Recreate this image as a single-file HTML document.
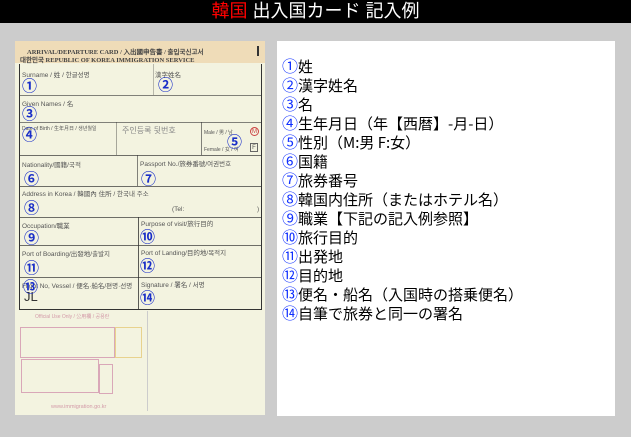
<!DOCTYPE html>
<html><head><meta charset="utf-8"><style>
*{margin:0;padding:0;box-sizing:border-box}
body{width:631px;height:437px;background:#cccccc;position:relative;overflow:hidden;font-family:"Liberation Sans","Noto Sans CJK JP",sans-serif}
#hd{position:absolute;left:0;top:0;width:631px;height:23px;background:#000;color:#fff;text-align:center;font-size:18px;line-height:23px;letter-spacing:0px}
#hd span{color:#ff0000}
#card{position:absolute;left:15px;top:41px;width:250px;height:374px;background:#f3f3e0;overflow:hidden}
#band{position:absolute;left:0;top:0;width:250px;height:22px;background:#efdcb8}
.a{position:absolute;color:#555;font-size:6.5px;white-space:nowrap}
.l{position:absolute;background:#333}
.n{position:absolute;color:#1a2fc8;font-size:15px;font-weight:bold;font-family:"Liberation Serif","Noto Sans CJK JP",serif}
.p{position:absolute;border:1px solid #d9a7b8}
#list{position:absolute;left:277px;top:41px;width:338px;height:375px;background:#fff}
#list div{position:absolute;left:5px;font-size:15px;line-height:19px;color:#000;white-space:nowrap;font-family:"Noto Sans CJK JP",sans-serif}
#list b{font-weight:normal;color:#1030ff;font-size:16px}
</style></head><body>
<div id="hd"><span>韓国</span> 出入国カード 記入例</div>
<div id="card">
<div id="band"></div>
<div class="a" style="left:12px;top:5px;color:#444;font-weight:bold;font-family:'Liberation Serif',serif">ARRIVAL/DEPARTURE CARD / 入出國申告書 / 출입국신고서</div>
<div class="a" style="left:5px;top:13px;color:#444;font-weight:bold;font-family:'Liberation Serif',serif">대한민국 REPUBLIC OF KOREA IMMIGRATION SERVICE</div>
<div class="l" style="left:242px;top:5px;width:2px;height:10px"></div>
<div class="l" style="left:4px;top:23px;width:1px;height:246px"></div>
<div class="l" style="left:246px;top:23px;width:1px;height:246px"></div>
<div class="l" style="left:4px;top:268px;width:243px;height:1px"></div>
<div class="l" style="left:4px;top:54px;width:243px;height:1px;opacity:.6"></div>
<div class="l" style="left:4px;top:81px;width:243px;height:1px;opacity:.6"></div>
<div class="l" style="left:4px;top:114px;width:243px;height:1px;opacity:.7"></div>
<div class="l" style="left:4px;top:145px;width:243px;height:1px;opacity:.7"></div>
<div class="l" style="left:4px;top:176px;width:243px;height:1px;opacity:.7"></div>
<div class="l" style="left:4px;top:204px;width:243px;height:1px;opacity:.7"></div>
<div class="l" style="left:4px;top:236px;width:243px;height:1px;opacity:.7"></div>
<div class="l" style="left:138px;top:23px;width:1px;height:31px;opacity:.3"></div>
<div class="l" style="left:101px;top:81px;width:1px;height:33px;opacity:.4"></div>
<div class="l" style="left:186px;top:81px;width:1px;height:33px;opacity:.6"></div>
<div class="l" style="left:122px;top:114px;width:1px;height:31px;opacity:.6"></div>
<div class="l" style="left:123px;top:176px;width:1px;height:93px;opacity:.8"></div>
<div class="a" style="left:7px;top:28px">Surname / 姓 / 한글성명</div>
<div class="a" style="left:140px;top:28px">漢字姓名</div>
<div class="a" style="left:7px;top:57px">Given Names / 名</div>
<div class="a" style="left:7px;top:84px;font-size:5px">Date of Birth / 生年月日 / 생년월일</div>
<div class="a" style="left:107px;top:84px;font-size:8px;color:#888">주인등록 뒷번호</div>
<div class="a" style="left:189px;top:88px;font-size:5px">Male / 男 / 남</div>
<div class="a" style="left:189px;top:105px;font-size:5px">Female / 女 / 여</div>
<div style="position:absolute;left:235px;top:86px;width:9px;height:9px;border:1px solid #c44;border-radius:50%;font-size:6px;color:#c44;text-align:center;line-height:8px">M</div>
<div style="position:absolute;left:235px;top:102px;width:8px;height:9px;border:1px solid #666;font-size:6px;color:#555;text-align:center;line-height:8px">F</div>
<div class="a" style="left:7px;top:118px">Nationality/國籍/국적</div>
<div class="a" style="left:125px;top:117px">Passport No./旅券番號/여권번호</div>
<div class="a" style="left:7px;top:147px">Address in Korea / 韓國內 住所 / 한국내 주소</div>
<div class="a" style="left:157px;top:165px">(Tel:</div>
<div class="a" style="left:242px;top:165px">)</div>
<div class="a" style="left:7px;top:179px">Occupation/職業</div>
<div class="a" style="left:126px;top:177px">Purpose of visit/旅行目的</div>
<div class="a" style="left:7px;top:207px">Port of Boarding/出發地/출발지</div>
<div class="a" style="left:126px;top:206px">Port of Landing/目的地/목적지</div>
<div class="a" style="left:7px;top:239px">Flight No, Vessel / 便名·船名/편명·선명</div>
<div class="a" style="left:126px;top:238px">Signature / 署名 / 서명</div>
<div style="position:absolute;left:9px;top:248px;font-size:13px;color:#333">JL</div>
<div class="n" style="left:7px;top:34px">①</div>
<div class="n" style="left:143px;top:33px">②</div>
<div class="n" style="left:7px;top:62px">③</div>
<div class="n" style="left:7px;top:83px">④</div>
<div class="n" style="left:212px;top:90px">⑤</div>
<div class="n" style="left:9px;top:127px">⑥</div>
<div class="n" style="left:126px;top:127px">⑦</div>
<div class="n" style="left:9px;top:156px">⑧</div>
<div class="n" style="left:9px;top:186px">⑨</div>
<div class="n" style="left:125px;top:185px">⑩</div>
<div class="n" style="left:9px;top:216px">⑪</div>
<div class="n" style="left:125px;top:214px">⑫</div>
<div class="n" style="left:8px;top:235px">⑬</div>
<div class="n" style="left:125px;top:246px">⑭</div>
<div class="a" style="left:20px;top:272px;color:#d39aa8;font-size:5px">Official Use Only / 公用欄 / 공용란</div>
<div class="p" style="left:5px;top:286px;width:95px;height:31px"></div>
<div class="p" style="left:100px;top:286px;width:27px;height:31px;border-color:#e8d28e"></div>
<div class="p" style="left:6px;top:318px;width:78px;height:34px"></div>
<div class="p" style="left:84px;top:323px;width:14px;height:30px"></div>
<div class="l" style="left:132px;top:270px;width:1px;height:100px;background:#ccc"></div>
<div class="a" style="left:36px;top:363px;color:#d39aa8;font-size:5.5px">www.immigration.go.kr</div>
</div>
<div id="list">
<div style="top:15px"><b>①</b>姓</div>
<div style="top:34px"><b>②</b>漢字姓名</div>
<div style="top:53px"><b>③</b>名</div>
<div style="top:72px"><b>④</b>生年月日（年【西暦】-月-日）</div>
<div style="top:91px"><b>⑤</b>性別（M:男 F:女）</div>
<div style="top:110px"><b>⑥</b>国籍</div>
<div style="top:129px"><b>⑦</b>旅券番号</div>
<div style="top:148px"><b>⑧</b>韓国内住所（またはホテル名）</div>
<div style="top:167px"><b>⑨</b>職業【下記の記入例参照】</div>
<div style="top:186px"><b>⑩</b>旅行目的</div>
<div style="top:205px"><b>⑪</b>出発地</div>
<div style="top:224px"><b>⑫</b>目的地</div>
<div style="top:243px"><b>⑬</b>便名・船名（入国時の搭乗便名）</div>
<div style="top:262px"><b>⑭</b>自筆で旅券と同一の署名</div>
</div>
</body></html>
